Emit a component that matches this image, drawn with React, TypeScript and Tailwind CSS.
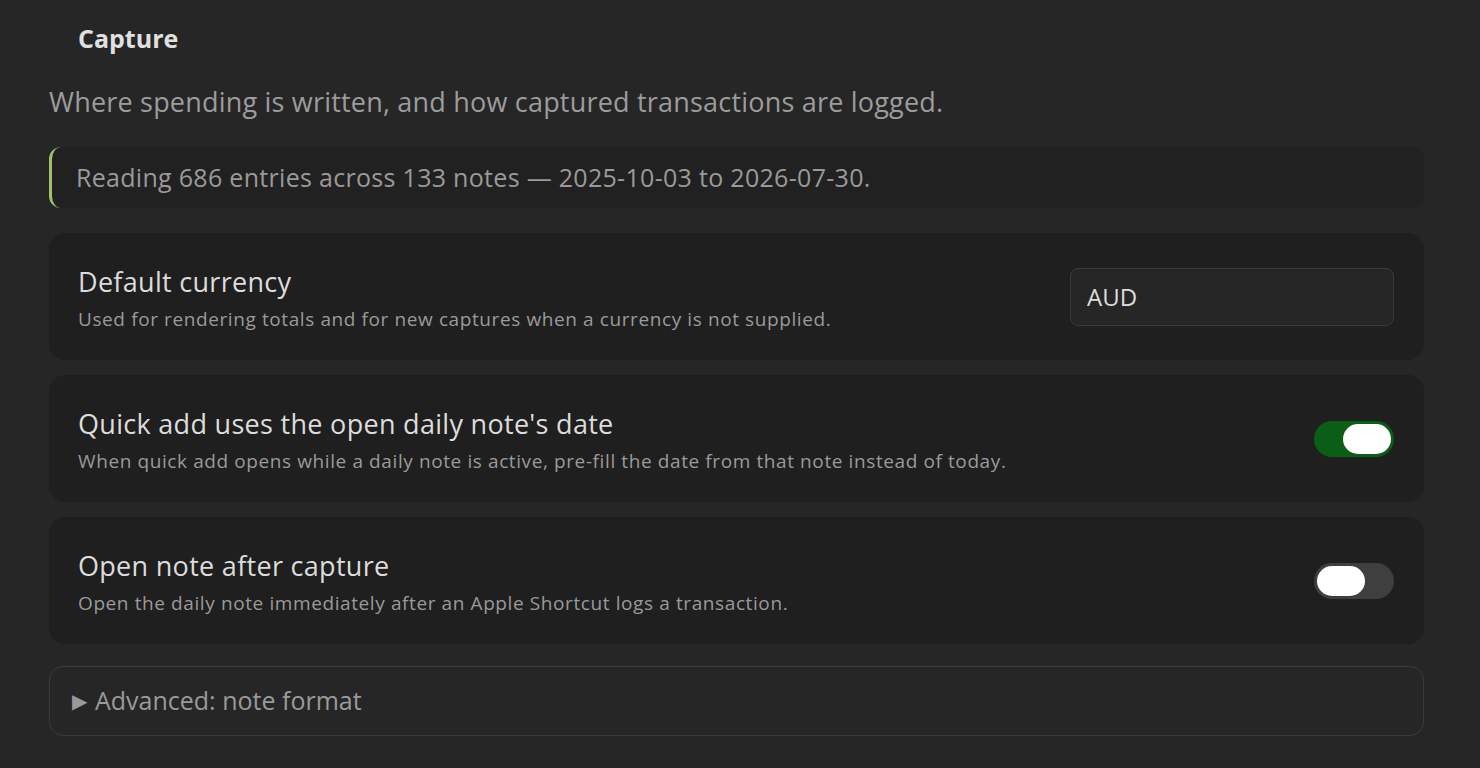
import React from "react";

const font = { fontFamily: '"Open Sans", "Noto Sans", sans-serif' };

function Toggle({ on }: { on: boolean }) {
  return (
    <div
      className={
        "flex h-[36px] w-[80px] shrink-0 items-center rounded-full px-[3px] " +
        (on ? "justify-end bg-[#0b5e17]" : "justify-start bg-[#3f3f3f]")
      }
    >
      <div className="h-[30px] w-[48px] rounded-full bg-white" />
    </div>
  );
}

function SettingCard({
  title,
  desc,
  children,
}: {
  title: string;
  desc: string;
  children: React.ReactNode;
}) {
  return (
    <div className="flex h-[127px] items-center justify-between rounded-[16px] bg-[#1f1f1f] pl-[29px] pr-[30px]">
      <div className="flex flex-col pt-[2px]">
        <div className="text-[27px] leading-[36px] tracking-[0.3px] text-[#dcdcdc]">{title}</div>
        <div className="mt-[6px] text-[19px] leading-[26px] tracking-[0.6px] text-[#9a9a9a]">{desc}</div>
      </div>
      {children}
    </div>
  );
}

export default function App() {
  return (
    <div className="min-h-[768px] w-full bg-[#262626] pl-[49px] pr-[56px]" style={font}>
      <div className="pl-[29px] pt-[20px] text-[25px] font-bold leading-[36px] text-[#e0e0e0]">
        Capture
      </div>
      <div className="mt-[28px] text-[27px] leading-[36px] tracking-[0.2px] text-[#9c9c9c]">
        Where spending is written, and how captured transactions are logged.
      </div>
      <div className="mt-[27px] flex h-[61px] items-center rounded-[12px] border-l-[3px] border-[#a3c06b] bg-[#212121] pl-[24px] text-[25px] tracking-[0.3px] text-[#9a9a9a]">
        Reading 686 entries across 133 notes — 2025-10-03 to 2026-07-30.
      </div>
      <div className="mt-[25px] flex flex-col gap-[15px]">
        <SettingCard
          title="Default currency"
          desc="Used for rendering totals and for new captures when a currency is not supplied."
        >
          <div className="flex h-[58px] w-[324px] items-center rounded-[8px] border border-[#3a3a3a] bg-[#262626] px-[16px] text-[24px] text-[#dcdcdc]">
            AUD
          </div>
        </SettingCard>
        <SettingCard
          title="Quick add uses the open daily note's date"
          desc="When quick add opens while a daily note is active, pre-fill the date from that note instead of today."
        >
          <Toggle on />
        </SettingCard>
        <SettingCard
          title="Open note after capture"
          desc="Open the daily note immediately after an Apple Shortcut logs a transaction."
        >
          <Toggle on={false} />
        </SettingCard>
      </div>
      <div className="mt-[22px] flex h-[70px] items-center gap-[8px] rounded-[14px] border border-[#3a3a3a] pl-[22px] text-[25px] text-[#9a9a9a]">
        <span className="text-[20px] leading-none">▶</span>
        <span>Advanced: note format</span>
      </div>
    </div>
  );
}
